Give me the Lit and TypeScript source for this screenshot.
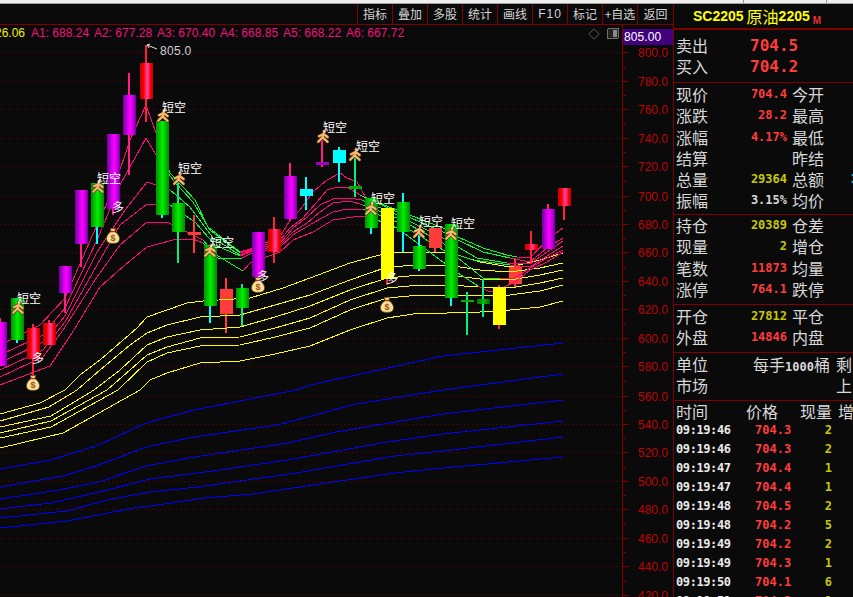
import { LitElement, html, css, svg } from "lit";
import { customElement } from "lit/decorators.js";

type Pt = [number, number];

const PINK: { pts: Pt[]; green: [number, number][] }[] = [
  { green: [[158, 243], [366, 517]], pts: [[0,345],[40,325],[65,298],[97,225],[113,190],[130,140],[146,105],[156,133],[170,173],[195,200],[208,227],[240,252],[250,249],[280,237],[290,220],[300,210],[313,192],[327,180],[340,173],[347,178],[357,182],[366,198],[397,210],[443,228],[458,237],[483,248],[507,255],[517,257],[530,258],[547,240],[563,228]] },
  { green: [[165, 243], [360, 510]], pts: [[0,355],[43,335],[65,308],[97,240],[120,185],[146,138],[162,165],[173,180],[193,202],[210,230],[240,253],[250,250],[280,240],[290,228],[303,218],[317,202],[327,190],[337,187],[347,187],[360,195],[397,212],[443,232],[458,240],[483,252],[510,258],[530,262],[547,248],[563,238]] },
  { green: [[172, 243], [362, 507]], pts: [[0,363],[43,342],[65,316],[97,252],[125,210],[147,182],[170,190],[190,207],[213,238],[240,255],[250,251],[280,243],[293,228],[307,217],[320,205],[333,199],[350,198],[362,200],[397,215],[443,238],[458,247],[477,258],[507,263],[530,264],[547,252],[563,241]] },
  { green: [[176, 243], [363, 510]], pts: [[0,370],[43,350],[65,322],[97,265],[120,225],[147,204],[170,205],[195,222],[215,245],[240,256],[250,252],[280,245],[293,232],[307,223],[320,212],[333,203],[350,201],[363,205],[397,218],[443,243],[458,255],[473,260],[510,265],[530,267],[547,256],[563,246]] },
  { green: [[190, 242], [363, 500]], pts: [[0,377],[43,357],[63,330],[97,277],[120,245],[147,222],[167,222],[203,240],[218,258],[242,258],[250,254],[280,247],[293,235],[313,223],[333,212],[347,209],[363,209],[397,222],[443,250],[458,258],[483,278],[500,278],[515,278],[530,268],[547,258],[563,250]] },
  { green: [[203, 243], [367, 478]], pts: [[0,385],[50,366],[72,333],[100,287],[125,265],[147,247],[173,240],[193,239],[203,243],[218,256],[243,271],[250,263],[280,252],[293,240],[313,232],[333,220],[353,217],[367,216],[397,228],[443,262],[458,273],[478,286],[490,292],[502,288],[515,282],[530,270],[547,262],[563,252]] },
];

const YELLOW: Pt[][] = [
  [[0,414],[40,403],[65,390],[80,375],[100,360],[137,328],[147,317],[187,303],[203,301],[250,298],[283,288],[310,278],[350,263],[387,253],[420,252],[451,253],[480,262],[510,267],[540,260],[563,253]],
  [[0,421],[49,407],[77,390],[100,370],[130,345],[147,333],[167,325],[200,317],[240,315],[275,305],[310,295],[350,280],[387,267],[420,265],[447,265],[480,270],[510,272],[540,268],[563,263]],
  [[0,427],[51,416],[94,390],[120,370],[147,345],[167,337],[200,330],[240,327],[275,317],[310,306],[350,290],[387,278],[420,275],[447,275],[480,279],[510,280],[540,275],[563,270]],
  [[0,433],[51,421],[107,390],[130,370],[147,355],[167,347],[200,338],[240,337],[275,328],[310,318],[350,300],[387,288],[420,285],[447,285],[480,287],[510,288],[540,283],[563,278]],
  [[0,438],[51,427],[118,390],[147,362],[167,353],[200,346],[240,345],[275,337],[310,328],[350,310],[387,298],[420,295],[447,295],[480,296],[510,295],[540,291],[563,285]],
  [[0,448],[63,433],[99,413],[140,390],[150,380],[167,373],[200,363],[240,361],[275,354],[310,346],[350,330],[387,318],[420,313],[447,313],[480,312],[510,310],[540,307],[563,301]],
];

const BLUE: Pt[][] = [
  [[0,469],[51,460],[99,445],[146,423],[194,410],[296,390],[310,385],[443,356],[563,343]],
  [[0,487],[63,476],[99,465],[146,447],[194,437],[277,425],[356,404],[443,390],[563,374]],
  [[0,499],[59,490],[99,482],[146,466],[194,457],[288,443],[336,432],[395,422],[443,414],[563,400]],
  [[0,509],[51,503],[99,492],[150,479],[198,473],[288,460],[387,442],[443,434],[563,421]],
  [[0,518],[67,511],[107,500],[150,492],[198,487],[296,473],[395,456],[443,451],[563,437]],
  [[0,528],[67,521],[134,508],[150,506],[205,498],[253,494],[340,481],[395,473],[443,468],[563,457]],
];

type Candle = { c: number; t: number; b: number; w0: number; w1: number; fill: string; wick: string };
const R = "url(#cr)", P = "url(#cp)", G = "url(#cg)", DG = "url(#cdg)";
const CY = "#00ffff", GW = "#00f080", RW = "#ff2040", MW = "#ff2080", FLAT = "#ff3c3c", YL = "#ffff00";

const UNDER: Candle[] = [
  { c: 226, t: 289, b: 314, w0: 278, w1: 333, fill: FLAT, wick: FLAT },
  { c: 515, t: 266, b: 284, w0: 258, w1: 288, fill: FLAT, wick: FLAT },
];
const OVER: Candle[] = [
  { c: 0, t: 322, b: 366, w0: 318, w1: 366, fill: P, wick: MW },
  { c: 17, t: 298, b: 340, w0: 298, w1: 343, fill: G, wick: CY },
  { c: 33, t: 328, b: 359, w0: 324, w1: 375, fill: R, wick: RW },
  { c: 49, t: 323, b: 345, w0: 320, w1: 345, fill: R, wick: RW },
  { c: 65, t: 266, b: 293, w0: 266, w1: 313, fill: P, wick: MW },
  { c: 81, t: 190, b: 244, w0: 190, w1: 267, fill: P, wick: MW },
  { c: 97, t: 183, b: 227, w0: 183, w1: 244, fill: G, wick: CY },
  { c: 113, t: 134, b: 209, w0: 134, w1: 215, fill: P, wick: MW },
  { c: 129, t: 95, b: 135, w0: 73, w1: 175, fill: P, wick: MW },
  { c: 146, t: 63, b: 99, w0: 45, w1: 122, fill: R, wick: RW },
  { c: 162, t: 121, b: 215, w0: 121, w1: 218, fill: G, wick: CY },
  { c: 178, t: 203, b: 232, w0: 181, w1: 263, fill: G, wick: GW },
  { c: 194, t: 232, b: 235, w0: 215, w1: 253, fill: FLAT, wick: FLAT },
  { c: 210, t: 245, b: 306, w0: 245, w1: 323, fill: G, wick: CY },
  { c: 242, t: 288, b: 308, w0: 284, w1: 326, fill: G, wick: GW },
  { c: 258, t: 232, b: 277, w0: 232, w1: 277, fill: P, wick: MW },
  { c: 274, t: 229, b: 252, w0: 217, w1: 263, fill: R, wick: RW },
  { c: 290, t: 176, b: 219, w0: 163, w1: 221, fill: P, wick: MW },
  { c: 306, t: 189, b: 196, w0: 177, w1: 210, fill: CY, wick: CY },
  { c: 322, t: 162, b: 165, w0: 140, w1: 167, fill: "#a000c0", wick: MW },
  { c: 339, t: 150, b: 163, w0: 147, w1: 182, fill: CY, wick: CY },
  { c: 355, t: 186, b: 189, w0: 158, w1: 197, fill: "#00b000", wick: GW },
  { c: 371, t: 198, b: 228, w0: 198, w1: 234, fill: G, wick: CY },
  { c: 387, t: 208, b: 279, w0: 208, w1: 285, fill: YL, wick: RW },
  { c: 403, t: 202, b: 232, w0: 193, w1: 252, fill: G, wick: CY },
  { c: 419, t: 246, b: 269, w0: 234, w1: 271, fill: G, wick: CY },
  { c: 435, t: 228, b: 248, w0: 228, w1: 252, fill: FLAT, wick: FLAT },
  { c: 451, t: 224, b: 298, w0: 224, w1: 306, fill: G, wick: CY },
  { c: 467, t: 300, b: 302, w0: 292, w1: 335, fill: "#00b000", wick: GW },
  { c: 483, t: 299, b: 304, w0: 279, w1: 317, fill: DG, wick: GW },
  { c: 499, t: 287, b: 325, w0: 285, w1: 329, fill: YL, wick: RW },
  { c: 531, t: 244, b: 250, w0: 231, w1: 263, fill: R, wick: RW },
  { c: 548, t: 209, b: 249, w0: 204, w1: 249, fill: P, wick: MW },
  { c: 564, t: 188, b: 206, w0: 188, w1: 220, fill: R, wick: RW },
];

const SHORTS: { mx: number; my: number; tx: number; ty: number }[] = [
  { mx: 157, my: 108, tx: 162, ty: 107 },
  { mx: 173, my: 171, tx: 178, ty: 168 },
  { mx: 92, my: 179, tx: 97, ty: 178 },
  { mx: 12, my: 300, tx: 17, ty: 298 },
  { mx: 204, my: 243, tx: 210, ty: 242 },
  { mx: 317, my: 129, tx: 323, ty: 127 },
  { mx: 349, my: 147, tx: 356, ty: 146 },
  { mx: 365, my: 201, tx: 371, ty: 198 },
  { mx: 413, my: 224, tx: 419, ty: 221 },
  { mx: 445, my: 226, tx: 451, ty: 223 },
];
const BAGS: { x: number; y: number; lx: number; ly: number }[] = [
  { x: 33, y: 383, lx: 38, ly: 358 },
  { x: 113, y: 236, lx: 118, ly: 207 },
  { x: 258, y: 285, lx: 263, ly: 276 },
  { x: 387, y: 305, lx: 392, ly: 278 },
];
const GRID = [52, 81, 109, 138, 166, 196, 224, 252, 281, 309, 338, 366, 396, 424, 452, 481, 509, 538, 566, 595];
const AXIS = [800, 780, 760, 740, 720, 700, 680, 660, 640, 620, 600, 580, 560, 540, 520, 500, 480, 460, 440, 420];

const ptStr = (p: Pt[]) => p.map((q) => q.join(",")).join(" ");

function pinkRuns(l: { pts: Pt[]; green: [number, number][] }) {
  const runs: { pts: Pt[]; green: boolean }[] = [];
  for (let i = 1; i < l.pts.length; i++) {
    const mid = (l.pts[i - 1][0] + l.pts[i][0]) / 2;
    const green = l.green.some(([a, b]) => mid >= a && mid <= b);
    const last = runs[runs.length - 1];
    if (last && last.green === green) last.pts.push(l.pts[i]);
    else runs.push({ pts: [l.pts[i - 1], l.pts[i]], green });
  }
  return runs;
}

const candleSvg = (k: Candle) => svg`
  <rect x=${k.c - 1} y=${k.w0} width="2" height=${k.w1 - k.w0} fill=${k.wick}></rect>
  <rect x=${k.c - 6} y=${k.t} width="13" height=${k.b - k.t} fill=${k.fill}></rect>
`;

const runner = (x: number, y: number) => svg`
  <g transform="translate(${x} ${y})" fill="none" stroke-linecap="round" stroke-linejoin="round">
    <path d="M2 7.2 L6.5 5 L10.6 8 M6.5 5 L5.6 8.4 L1.2 12.8 M5.6 8.4 L10.6 12.8" stroke="#4e2a0c" stroke-width="3.4"></path>
    <circle cx="7.2" cy="2.4" r="2.2" fill="#4e2a0c"></circle>
    <path d="M2 7.2 L6.5 5 L10.6 8 M6.5 5 L5.6 8.4 L1.2 12.8 M5.6 8.4 L10.6 12.8" stroke="#f4b86e" stroke-width="2.2"></path>
    <circle cx="7.2" cy="2.4" r="1.5" fill="#f4b86e"></circle>
  </g>`;

const bag = (x: number, y: number) => svg`
  <g transform="translate(${x - 7} ${y - 8})">
    <path d="M4 .6 L10 .6 L8.6 3.6 L5.4 3.6 Z" fill="#f4d27a" stroke="#6b4510" stroke-width=".7"></path>
    <path d="M5.2 3.6 L8.8 3.6 C12.6 6 14 9.4 13.4 12 C12.8 14.6 10.6 15.4 7 15.4 C3.4 15.4 1.2 14.6 .6 12 C0 9.4 1.4 6 5.2 3.6 Z" fill="#f8e29a" stroke="#6b4510" stroke-width=".8"></path>
    <rect x="4.8" y="3" width="4.4" height="1.2" fill="#b8281c"></rect>
    <text x="7" y="13" text-anchor="middle" class="dollar">$</text>
  </g>`;

@customElement("app-root")
export class AppRoot extends LitElement {
  static styles = css`
    :host { display: block; width: 853px; height: 597px; overflow: hidden; background: #0a0a0a; font-family: "Liberation Sans", "Noto Sans CJK SC", sans-serif; }
    .strip { display: flex; height: 3px; background: #efefef; border-bottom: 1px solid #a0a0a0; }
    .strip span { border-right: 1px solid #999; }
    .strip .a { width: 743px; }
    .strip .b { width: 82px; }
    .main { display: flex; height: 593px; }
    .left { width: 673px; flex: none; display: flex; flex-direction: column; }
    .toolbar { display: flex; justify-content: flex-end; height: 20px; border-bottom: 1px solid #800000; flex: none; }
    .toolbar span { width: 34px; border-left: 1px solid #800000; color: #d4d4d4; font: 12px/20px "Noto Sans CJK SC", sans-serif; text-align: center; }
    .toolbar span.last { width: 35px; }
    .toolbar span.ascii { font-family: "Liberation Sans", sans-serif; letter-spacing: 1px; }
    .body { display: flex; flex: 1; min-height: 0; }
    .chart { width: 622px; flex: none; display: flex; flex-direction: column; }
    .legend { height: 17px; flex: none; display: flex; align-items: center; font: 12px/17px "Liberation Sans", sans-serif; color: #f0107a; white-space: nowrap; overflow: hidden; }
    .legend .close { width: 31px; flex: none; color: #f0f000; display: flex; justify-content: flex-end; padding-right: 6px; box-sizing: border-box; }
    .legend .ma { width: 63px; flex: none; }
    .legend .tools { flex: 1; display: flex; justify-content: flex-end; align-items: center; gap: 7px; padding-right: 3px; }
    svg { display: block; }
    .plot .t { font: 12px "Noto Sans CJK SC", sans-serif; fill: #fff; }
    .plot .peak { font: 12px "Liberation Sans", sans-serif; fill: #d0d0d0; letter-spacing: .3px; }
    .plot .dollar { font: bold 9px "Liberation Sans", sans-serif; fill: #9a4a10; }
    .axis { width: 51px; flex: none; }
    .axis .l { font: 12px "Liberation Sans", sans-serif; fill: #c00000; }
    .axis .hi { font: 12px "Liberation Sans", sans-serif; fill: #fff; letter-spacing: .1px; }
    .panel { width: 180px; flex: none; border-left: 1px solid #800000; overflow: hidden; box-sizing: border-box; color: #d8d8d8; font: 16px "Noto Sans CJK SC", sans-serif; }
    .title { height: 26px; display: flex; align-items: center; padding-left: 19px; color: #ffff00; border-bottom: 2px solid #800000; box-sizing: border-box; white-space: nowrap; }
    .title b { font: bold 14px "Liberation Sans", sans-serif; }
    .title .cn { font-size: 16px; margin-left: 3px; }
    .title .m { color: #e83030; font: bold 10px "Liberation Sans", sans-serif; margin: 8px 0 0 3px; }
    .sec { border-bottom: 1px solid #800000; box-sizing: border-box; }
    .row { display: flex; height: 21.3px; line-height: 21.3px; padding-left: 2px; white-space: nowrap; }
    .row .lab { width: 34px; flex: none; }
    .row .val { width: 77px; flex: none; text-align: right; font: bold 12px/21.3px "DejaVu Sans Mono", monospace; }
    .row .lab2 { width: 59px; flex: none; margin-left: 5px; }
    .row .extra { color: #00e0ff; font: bold 12px/21.3px "DejaVu Sans Mono", monospace; }
    .big { font: bold 16px/21px "DejaVu Sans Mono", monospace; color: #ff3c3c; margin-left: 40px; }
    .red { color: #ff3c3c; }
    .yel { color: #c8c800; }
    .wht { color: #d8d8d8; }
    .s-top { height: 53px; padding-top: 5px; }
    .s-a { height: 132px; padding-top: 1px; }
    .s-b { height: 90px; padding-top: 0; }
    .s-c { height: 48px; padding-top: 1px; }
    .s-d { height: 48px; padding-top: 1px; }
    .unit .v { width: 80px; margin-left: 40px; flex: none; text-align: right; white-space: nowrap; margin-right: 6px; }
    .unit .v b { font: bold 12px "DejaVu Sans Mono", monospace; }
    .thead { display: flex; height: 20px; line-height: 20px; padding-left: 2px; white-space: nowrap; }
    .thead .h1 { width: 70px; flex: none; }
    .thead .h2 { width: 54px; flex: none; }
    .thead .h3 { width: 38px; flex: none; }
    .tr { display: flex; height: 19px; padding-left: 2px; font: bold 12px/19px "DejaVu Sans Mono", monospace; white-space: nowrap; }
    .tr .time { width: 79px; flex: none; color: #eaeaea; letter-spacing: -.4px; }
    .tr .price { width: 35px; flex: none; color: #ff3c3c; }
    .tr .qty { width: 42px; flex: none; text-align: right; color: #c8c800; }
  `;

  private tools = ["指标", "叠加", "多股", "统计", "画线", "F10", "标记", "+自选", "返回"];
  private mas = ["A1: 688.24", "A2: 677.28", "A3: 670.40", "A4: 668.85", "A5: 668.22", "A6: 667.72"];
  private rowsA = [
    ["现价", "704.4", "今开", "red"],
    ["涨跌", "28.2", "最高", "red"],
    ["涨幅", "4.17%", "最低", "red"],
    ["结算", "", "昨结", ""],
    ["总量", "29364", "总额", "yel"],
    ["振幅", "3.15%", "均价", "wht"],
  ];
  private rowsB = [
    ["持仓", "20389", "仓差", "yel"],
    ["现量", "2", "增仓", "yel"],
    ["笔数", "11873", "均量", "red"],
    ["涨停", "764.1", "跌停", "red"],
  ];
  private rowsC = [
    ["开仓", "27812", "平仓", "yel"],
    ["外盘", "14846", "内盘", "red"],
  ];
  private tape = [
    ["09:19:46", "704.3", "2"],
    ["09:19:46", "704.3", "2"],
    ["09:19:47", "704.4", "1"],
    ["09:19:47", "704.4", "1"],
    ["09:19:48", "704.5", "2"],
    ["09:19:48", "704.2", "5"],
    ["09:19:49", "704.2", "2"],
    ["09:19:49", "704.3", "1"],
    ["09:19:50", "704.1", "6"],
    ["09:19:51", "704.3", "1"],
  ];

  private row(r: string[]) {
    return html`<div class="row">
      <span class="lab">${r[0]}</span><span class="val ${r[3]}">${r[1]}</span><span class="lab2">${r[2]}</span>
      ${r[2] === "总额" ? html`<span class="extra">3</span>` : ""}
    </div>`;
  }

  private plot() {
    return html`<svg class="plot" width="622" height="555" viewBox="0 42 622 555" shape-rendering="crispEdges">
      <defs>
        <linearGradient id="cr"><stop offset="0" stop-color="#c00000"></stop><stop offset=".3" stop-color="#ff0000"></stop><stop offset=".5" stop-color="#ff3c90"></stop><stop offset=".62" stop-color="#ff3c90"></stop><stop offset=".8" stop-color="#ff0000"></stop><stop offset="1" stop-color="#c00000"></stop></linearGradient>
        <linearGradient id="cp"><stop offset="0" stop-color="#70009c"></stop><stop offset=".3" stop-color="#c000e0"></stop><stop offset=".55" stop-color="#ff00ff"></stop><stop offset=".8" stop-color="#c000e0"></stop><stop offset="1" stop-color="#70009c"></stop></linearGradient>
        <linearGradient id="cg"><stop offset="0" stop-color="#009000"></stop><stop offset=".5" stop-color="#00f000"></stop><stop offset="1" stop-color="#008800"></stop></linearGradient>
        <linearGradient id="cdg"><stop offset="0" stop-color="#007000"></stop><stop offset=".5" stop-color="#00c000"></stop><stop offset="1" stop-color="#006000"></stop></linearGradient>
      </defs>
      ${GRID.map((y) => svg`<line x1="0" x2="622" y1=${y + 0.5} y2=${y + 0.5} stroke="#700000" stroke-dasharray="1 3"></line>`)}
      ${UNDER.map(candleSvg)}
      ${BLUE.map((l) => svg`<polyline points=${ptStr(l)} fill="none" stroke="#0000ff"></polyline>`)}
      ${YELLOW.map((l) => svg`<polyline points=${ptStr(l)} fill="none" stroke="#ffff00"></polyline>`)}
      ${PINK.map((l) => pinkRuns(l).map((r) => svg`<polyline points=${ptStr(r.pts)} fill="none" stroke=${r.green ? "#00ff30" : "#ff0878"}></polyline>`))}
      ${OVER.map(candleSvg)}
      <g shape-rendering="auto" stroke="#e0e0e0" fill="none" stroke-width="1">
        <path d="M147 45 L157 49 M147 45 L150 44 M147 45 L149 48"></path>
      </g>
      <text class="peak" x="160" y="55">805.0</text>
      <g shape-rendering="auto">
        ${BAGS.map((b) => bag(b.x, b.y))}
        ${SHORTS.map((s) => runner(s.mx, s.my))}
      </g>
      ${SHORTS.map((s) => svg`<text class="t" x=${s.tx} y=${s.ty + 5}>短空</text>`)}
      ${BAGS.map((b) => svg`<text class="t" x=${b.lx - 6} y=${b.ly + 5}>多</text>`)}
    </svg>`;
  }

  private axis() {
    const ticks: ReturnType<typeof svg>[] = [];
    GRID.forEach((y, i) => {
      ticks.push(svg`<rect x="0" y=${y} width="6" height="1" fill="#800000"></rect>`);
      if (i < GRID.length - 1) {
        const m = Math.round((y + GRID[i + 1]) / 2);
        ticks.push(svg`<rect x="0" y=${m} width="3" height="1" fill="#800000"></rect>`);
      }
    });
    return html`<svg class="axis" width="51" height="572" viewBox="622 25 51 572">
      <rect x="622" y="25" width="1" height="572" fill="#800000" shape-rendering="crispEdges"></rect>
      <rect x="623" y="29" width="50" height="16" fill="#400080" shape-rendering="crispEdges"></rect>
      <text class="hi" x="624" y="41">805.00</text>
      <g transform="translate(623 0)" shape-rendering="crispEdges">${ticks}</g>
      ${AXIS.map((v, i) => svg`<text class="l" x="668" y=${GRID[i] + 5} text-anchor="end">${v.toFixed(1)}</text>`)}
    </svg>`;
  }

  render() {
    return html`
      <div class="strip"><span class="a"></span><span class="b"></span></div>
      <div class="main">
        <div class="left">
          <div class="toolbar">
            ${this.tools.map((t, i) => html`<span class="${t === "F10" ? "ascii" : ""} ${i === 8 ? "last" : ""}">${t}</span>`)}
          </div>
          <div class="body">
            <div class="chart">
              <div class="legend">
                <span class="close">26.06</span>
                ${this.mas.map((m) => html`<span class="ma">${m}</span>`)}
                <span class="tools">
                  <svg width="12" height="12" viewBox="0 0 12 12"><path d="M6 .8 L11.2 6 L6 11.2 L.8 6 Z" fill="none" stroke="#5a5a5a"></path></svg>
                  <svg width="12" height="12" viewBox="0 0 12 12" shape-rendering="crispEdges"><rect x=".5" y=".5" width="11" height="10" rx="1.5" fill="#222" stroke="#6e6e6e"></rect><rect x="6" y="2" width="4" height="7" fill="#8a8a8a"></rect></svg>
                </span>
              </div>
              ${this.plot()}
            </div>
            ${this.axis()}
          </div>
        </div>
        <div class="panel">
          <div class="title"><b>SC2205</b><span class="cn">原油</span><b>2205</b><span class="m">M</span></div>
          <div class="sec s-top">
            <div class="row"><span class="lab">卖出</span><span class="big">704.5</span></div>
            <div class="row"><span class="lab">买入</span><span class="big">704.2</span></div>
          </div>
          <div class="sec s-a">${this.rowsA.map((r) => this.row(r))}</div>
          <div class="sec s-b">${this.rowsB.map((r) => this.row(r))}</div>
          <div class="sec s-c">${this.rowsC.map((r) => this.row(r))}</div>
          <div class="sec s-d">
            <div class="row unit"><span class="lab">单位</span><span class="v">每手<b>1000</b>桶</span><span>剩</span></div>
            <div class="row unit"><span class="lab">市场</span><span class="v"></span><span>上</span></div>
          </div>
          <div class="thead"><span class="h1">时间</span><span class="h2">价格</span><span class="h3">现量</span><span>增仓</span></div>
          ${this.tape.map((t) => html`<div class="tr"><span class="time">${t[0]}</span><span class="price">${t[1]}</span><span class="qty">${t[2]}</span></div>`)}
        </div>
      </div>
    `;
  }
}
